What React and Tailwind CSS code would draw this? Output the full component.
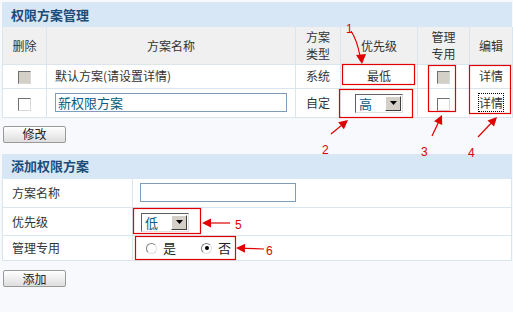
import React from "react";

const font = { fontFamily: '"Noto Sans CJK SC", "Liberation Sans", sans-serif' };

function Checkbox({ disabled }) {
  return (
    <span
      className={
        "inline-block w-[13px] h-[13px] border border-t-[#707070] border-l-[#707070] border-r-[#d8d8d8] border-b-[#d8d8d8] align-middle " +
        (disabled ? "bg-[#d4d0c8]" : "bg-white")
      }
    />
  );
}

function Select({ value, width }) {
  return (
    <div
      className="inline-flex items-center h-[19px] border border-t-[#606060] border-l-[#606060] border-r-[#e0e0e0] border-b-[#e0e0e0] bg-white text-left align-middle"
      style={{ width }}
    >
      <span className="flex-1 pl-[3px] text-[13px] leading-none text-[#0b5a80]">{value}</span>
      <span className="flex items-center justify-center w-[16px] h-[15px] mr-[1px] bg-[#d4d0c8] border border-t-white border-l-white border-r-[#404040] border-b-[#404040]">
        <svg width="7" height="4" viewBox="0 0 7 4">
          <polygon points="0,0 7,0 3.5,4" fill="#000" />
        </svg>
      </span>
    </div>
  );
}

function Button({ children }) {
  return (
    <button className="w-[63px] h-[17px] border border-[#9a9a9a] rounded-[2px] bg-gradient-to-b from-white to-[#dedede] text-[12px] leading-none text-[#222]">
      {children}
    </button>
  );
}

function Radio({ checked }) {
  return (
    <span className="inline-flex items-center justify-center w-[11px] h-[11px] rounded-full border border-t-[#808080] border-l-[#808080] border-r-[#e0e0e0] border-b-[#e0e0e0] bg-white">
      {checked && <span className="w-[4px] h-[4px] rounded-full bg-black" />}
    </span>
  );
}

const th = "border-r border-[#dbe5ee] font-normal text-[12px] leading-[17px] text-[#333]";
const td = "border-r border-b border-[#dbe5ee] text-[12px] text-[#333]";

function Arrow({ x1, y1, x2, y2 }) {
  const a = Math.atan2(y2 - y1, x2 - x1);
  const l = 9;
  const w = 4.5;
  const bx = x2 - l * Math.cos(a);
  const by = y2 - l * Math.sin(a);
  const px = -Math.sin(a) * w;
  const py = Math.cos(a) * w;
  return (
    <g>
      <line x1={x1} y1={y1} x2={bx} y2={by} stroke="#e00000" strokeWidth="1.2" />
      <polygon points={`${x2},${y2} ${bx + px},${by + py} ${bx - px},${by - py}`} fill="#e00000" />
    </g>
  );
}

export default function App() {
  return (
    <div className="relative w-[513px] h-[312px] bg-[#f7f9fc] overflow-hidden" style={font}>
      <div className="pt-[2px] pl-[2px] pr-[1px]">
        <div className="h-[25px] bg-[#d8e7f5] flex items-center pl-[9px] text-[13px] font-bold text-[#1b4d78]">
          权限方案管理
        </div>
        <table className="w-[510px] border-collapse table-fixed border-l border-[#dbe5ee]">
          <colgroup>
            <col className="w-[44px]" />
            <col className="w-[249px]" />
            <col className="w-[45px]" />
            <col className="w-[77px]" />
            <col className="w-[52px]" />
            <col className="w-[43px]" />
          </colgroup>
          <thead>
            <tr className="h-[37px] bg-[#f0f0f0] border-b border-[#dbe5ee]">
              <th className={th}>删除</th>
              <th className={th}>方案名称</th>
              <th className={th}>方案<br />类型</th>
              <th className={th}>优先级</th>
              <th className={th}>管理<br />专用</th>
              <th className={th}>编辑</th>
            </tr>
          </thead>
          <tbody className="bg-white">
            <tr className="h-[24px]">
              <td className={td + " text-center"}><Checkbox disabled /></td>
              <td className={td + " pl-[8px]"}>默认方案(请设置详情)</td>
              <td className={td + " text-center"}>系统</td>
              <td className={td + " text-center"}>最低</td>
              <td className={td + " text-center"}><Checkbox disabled /></td>
              <td className={td + " text-center"}>详情</td>
            </tr>
            <tr className="h-[29px]">
              <td className={td + " text-center"}><Checkbox /></td>
              <td className={td + " pl-[8px] pr-[8px]"}>
                <div className="h-[19px] border border-[#7f9db9] bg-white pl-[2px] text-[13px] leading-[17px] text-[#0b5a80]">
                  新权限方案
                </div>
              </td>
              <td className={td + " text-center"}>自定</td>
              <td className={td + " text-center"}><Select value="高" width={48} /></td>
              <td className={td + " text-center"}><Checkbox /></td>
              <td className={td + " text-center"}>
                <span className="outline-1 outline-dotted outline-black">详情</span>
              </td>
            </tr>
          </tbody>
        </table>
        <div className="flex pt-[8px] pl-[1px]">
          <Button>修改</Button>
        </div>
        <div className="mt-[11px] h-[25px] bg-[#d8e7f5] flex items-center pl-[9px] text-[13px] font-bold text-[#1b4d78]">
          添加权限方案
        </div>
        <table className="w-[510px] border-collapse table-fixed border-l border-[#dbe5ee]">
          <colgroup>
            <col className="w-[130px]" />
            <col />
          </colgroup>
          <tbody className="bg-white">
            <tr className="h-[29px]">
              <td className={td + " pl-[9px]"}>方案名称</td>
              <td className={td + " pl-[7px]"}>
                <div className="w-[156px] h-[19px] border border-[#7f9db9] bg-white" />
              </td>
            </tr>
            <tr className="h-[28px]">
              <td className={td + " pl-[9px]"}>优先级</td>
              <td className={td + " pl-[8px]"}><Select value="低" width={48} /></td>
            </tr>
            <tr className="h-[25px]">
              <td className={td + " pl-[9px]"}>管理专用</td>
              <td className={td + " pl-[13px]"}>
                <div className="flex items-center text-[13px] text-[#222]">
                  <Radio />
                  <span className="ml-[6px]">是</span>
                  <span className="ml-[25px] flex"><Radio checked /></span>
                  <span className="ml-[6px]">否</span>
                </div>
              </td>
            </tr>
          </tbody>
        </table>
        <div className="flex pt-[9px] pl-[1px]">
          <Button>添加</Button>
        </div>
      </div>

      <svg className="absolute inset-0 pointer-events-none" width="513" height="312" style={{ fontFamily: '"Liberation Sans", sans-serif' }}>
        <g fill="none" stroke="#e00000" strokeWidth="1.2">
          <rect x="342.5" y="64.5" width="72" height="20" />
          <rect x="339.5" y="89.5" width="73" height="28" />
          <rect x="428.5" y="65.5" width="27" height="46" />
          <rect x="469.5" y="65.5" width="41" height="48" />
          <rect x="133.5" y="208.5" width="67" height="25" />
          <rect x="135.5" y="236.5" width="100" height="23" />
          <path d="M351 31 Q357 40 360 56" />
        </g>
        <polygon points="356,55 366,54 362,64" fill="#e00000" />
        <Arrow x1={331} y1={134} x2={348} y2={120} />
        <Arrow x1={432} y1={136} x2={442} y2={115} />
        <Arrow x1={478} y1={137} x2={497} y2={117} />
        <Arrow x1={230} y1={223} x2={202} y2={223} />
        <Arrow x1={264} y1={249} x2={236} y2={248} />
        <g fill="#e00000" fontSize="12">
          <text x="346" y="33">1</text>
          <text x="322" y="154">2</text>
          <text x="421" y="156">3</text>
          <text x="468" y="157">4</text>
          <text x="235" y="229">5</text>
          <text x="266" y="255">6</text>
        </g>
      </svg>
    </div>
  );
}
